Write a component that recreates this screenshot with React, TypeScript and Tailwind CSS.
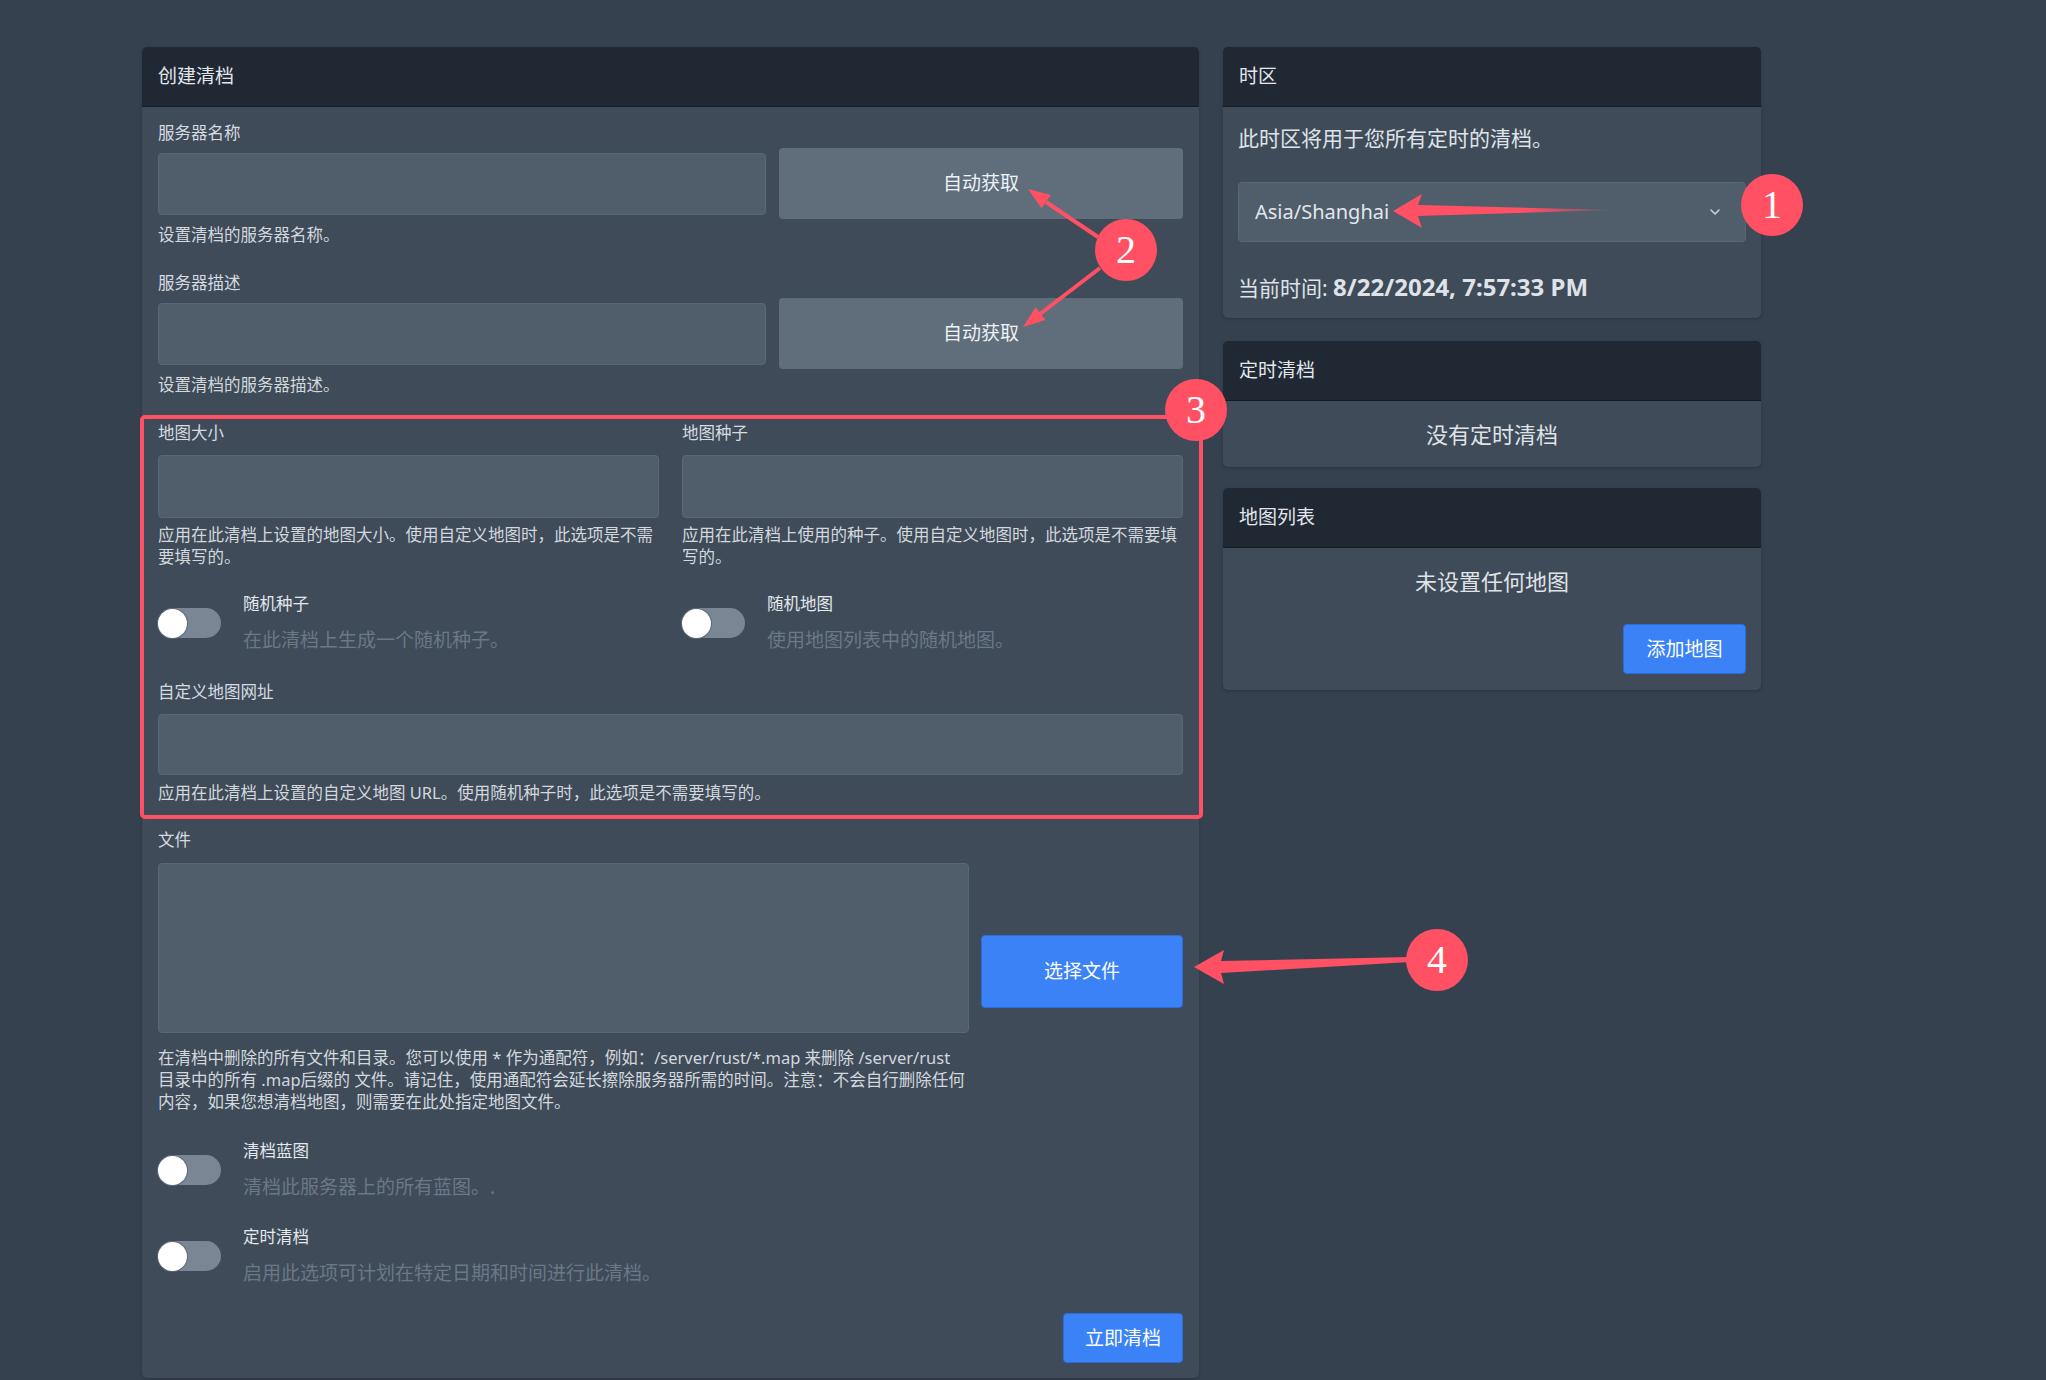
import { ChevronDown } from "lucide-react";

const font = "font-['Noto_Sans','Noto_Sans_CJK_SC',sans-serif]";

function Card({ title, children }: { title: string; children: React.ReactNode }) {
  return (
    <div className="overflow-hidden rounded-[5px] bg-[#3f4b59] shadow-[0_1px_3px_rgba(0,0,0,0.25)]">
      <div className="flex h-[60px] items-center border-b border-[#151b23] bg-[#1f2833] px-4 text-[19px] text-[#e3e7ec]">
        {title}
      </div>
      {children}
    </div>
  );
}

function Label({ children }: { children: React.ReactNode }) {
  return <div className="text-[16.5px] leading-[24px] text-[#d6dbe1]">{children}</div>;
}

function Help({ children, className = "" }: { children: React.ReactNode; className?: string }) {
  return <p className={"text-[16.5px] leading-[22px] text-[#d3d8de] " + className}>{children}</p>;
}

function Input({ className = "" }: { className?: string }) {
  return <div className={"rounded-[4px] border border-[#5b6777] bg-[#505d6b] " + className} />;
}

function Toggle({ title, desc }: { title: string; desc: string }) {
  return (
    <div className="flex items-center gap-[22px]">
      <div className="flex h-[30px] w-[63px] shrink-0 items-center rounded-full bg-[#7b8694]">
        <span className="size-[29px] rounded-full bg-white shadow-[0_0_0_1px_#5d6775]" />
      </div>
      <div>
        <div className="text-[16.5px] leading-[24px] text-[#e4e8ec]">{title}</div>
        <div className="mt-[10px] text-[19px] leading-[28px] text-[#6b7887]">{desc}</div>
      </div>
    </div>
  );
}

function Badge({ n, x, y }: { n: string; x: string; y: string }) {
  return (
    <div
      className={
        "absolute flex size-[62px] items-center justify-center rounded-full bg-[#ff5064] font-['Liberation_Serif',serif] text-[40px] leading-none text-white " +
        x +
        " " +
        y
      }
    >
      {n}
    </div>
  );
}

export default function App() {
  return (
    <div className={"relative h-[1380px] w-full overflow-hidden bg-[#364150] " + font}>
      <div className="flex items-start gap-[24px] pl-[142px] pt-[47px]">
        {/* 创建清档 */}
        <div className="w-[1057px]">
          <Card title="创建清档">
            <div className="px-4 pb-[15px] pt-[14px]">
              <Label>服务器名称</Label>
              <div className="mt-[3px] flex items-center gap-[13px]">
                <Input className="h-[62px] flex-1" />
                <button className="h-[71px] w-[404px] rounded-[4px] bg-[#606e7c] text-[19px] text-[#eef2f6]">
                  自动获取
                </button>
              </div>
              <div className="mt-[4px] text-[16.5px] leading-[24px] text-[#d3d8de]">设置清档的服务器名称。</div>

              <div className="mt-[24px]">
                <Label>服务器描述</Label>
                <div className="mt-[3px] flex items-center gap-[13px]">
                  <Input className="h-[62px] flex-1" />
                  <button className="h-[71px] w-[404px] rounded-[4px] bg-[#606e7c] text-[19px] text-[#eef2f6]">
                    自动获取
                  </button>
                </div>
                <div className="mt-[4px] text-[16.5px] leading-[24px] text-[#d3d8de]">设置清档的服务器描述。</div>
              </div>

              <div className="mt-[24px] grid grid-cols-2 gap-x-[23px]">
                <div>
                  <Label>地图大小</Label>
                  <Input className="mt-[10px] h-[63px]" />
                  <Help className="mt-[6px]">
                    应用在此清档上设置的地图大小。使用自定义地图时，此选项是不需要填写的。
                  </Help>
                </div>
                <div>
                  <Label>地图种子</Label>
                  <Input className="mt-[10px] h-[63px]" />
                  <Help className="mt-[6px]">
                    应用在此清档上使用的种子。使用自定义地图时，此选项是不需要填写的。
                  </Help>
                </div>
                <div className="mt-[24px]">
                  <Toggle title="随机种子" desc="在此清档上生成一个随机种子。" />
                </div>
                <div className="mt-[24px]">
                  <Toggle title="随机地图" desc="使用地图列表中的随机地图。" />
                </div>
              </div>

              <div className="mt-[26px]">
                <Label>自定义地图网址</Label>
                <Input className="mt-[10px] h-[61px]" />
                <Help className="mt-[7px]">
                  应用在此清档上设置的自定义地图 URL。使用随机种子时，此选项是不需要填写的。
                </Help>
              </div>

              <div className="mt-[24px]">
                <Label>文件</Label>
                <div className="mt-[11px] flex items-start gap-[12px]">
                  <Input className="h-[170px] w-[811px]" />
                  <button className="mt-[72px] h-[73px] flex-1 rounded-[4px] border border-[#2b6de0] bg-[#3b82f6] text-[19px] text-white">
                    选择文件
                  </button>
                </div>
                <Help className="mt-[14px] w-[811px]">
                  在清档中删除的所有文件和目录。您可以使用 * 作为通配符，例如：/server/rust/*.map 来删除 /server/rust
                  目录中的所有 .map后缀的 文件。请记住，使用通配符会延长擦除服务器所需的时间。注意：不会自行删除任何内容，如果您想清档地图，则需要在此处指定地图文件。
                </Help>
              </div>

              <div className="mt-[26px]">
                <Toggle title="清档蓝图" desc="清档此服务器上的所有蓝图。." />
              </div>
              <div className="mt-[24px]">
                <Toggle title="定时清档" desc="启用此选项可计划在特定日期和时间进行此清档。" />
              </div>

              <div className="mt-[26px] flex justify-end">
                <button className="h-[50px] w-[120px] rounded-[4px] border border-[#2b6de0] bg-[#3b82f6] text-[19px] text-white">
                  立即清档
                </button>
              </div>
            </div>
          </Card>
        </div>

        {/* 右侧 */}
        <div className="flex w-[538px] flex-col">
          <Card title="时区">
            <div className="px-[15px] pb-[14px] pt-[15px]">
              <div className="text-[21px] leading-[32px] text-[#dfe3e8]">此时区将用于您所有定时的清档。</div>
              <div className="mt-[28px] flex h-[60px] items-center justify-between rounded-[4px] border border-[#5b6777] bg-[#505d6b] pl-[16px] pr-[22px]">
                <span className="text-[20px] text-[#e3e7eb]">Asia/Shanghai</span>
                <ChevronDown className="size-[16px] text-[#cfd5dc]" strokeWidth={2.2} />
              </div>
              <div className="mt-[29px] text-[21px] leading-[32px] text-[#dfe3e8]">
                当前时间: <span className="text-[24px] font-bold">8/22/2024, 7:57:33 PM</span>
              </div>
            </div>
          </Card>

          <div className="mt-[23px]">
            <Card title="定时清档">
              <div className="flex h-[66px] items-center justify-center text-[22px] text-[#dfe3e8]">没有定时清档</div>
            </Card>
          </div>

          <div className="mt-[21px]">
            <Card title="地图列表">
              <div className="px-[15px] pb-[16px] pt-[17px]">
                <div className="text-center text-[22px] leading-[32px] text-[#dfe3e8]">未设置任何地图</div>
                <div className="mt-[27px] flex justify-end">
                  <button className="h-[50px] w-[123px] rounded-[4px] border border-[#2b6de0] bg-[#3b82f6] text-[19px] text-white">
                    添加地图
                  </button>
                </div>
              </div>
            </Card>
          </div>
        </div>
      </div>

      {/* 标注 */}
      <div className="pointer-events-none absolute left-[140px] top-[415px] h-[404px] w-[1063px] rounded-[5px] border-[4px] border-[#ff5064]" />
      <svg className="pointer-events-none absolute left-0 top-0" width="2046" height="1380" viewBox="0 0 2046 1380">
        <defs>
          <linearGradient id="fade1" x1="1393" y1="0" x2="1612" y2="0" gradientUnits="userSpaceOnUse">
            <stop offset="0.6" stopColor="#ff5064" />
            <stop offset="1" stopColor="#ff5064" stopOpacity="0.2" />
          </linearGradient>
        </defs>
        <polygon
          points="1393,211 1422,194 1418,205 1612,210 1418,216 1422,228"
          fill="url(#fade1)"
        />
        <polygon points="1194,967 1224,950 1221,961 1410,957 1410,962 1221,973 1224,984" fill="#ff5064" />
        <line x1="1098" y1="237" x2="1046" y2="202" stroke="#ff5064" strokeWidth="4" />
        <polygon points="1028,189 1050.7,195 1041.5,208.2" fill="#ff5064" />
        <line x1="1100" y1="268" x2="1040" y2="314" stroke="#ff5064" strokeWidth="4" />
        <polygon points="1023,327 1045.4,320 1035.6,307.2" fill="#ff5064" />
      </svg>
      <Badge n="1" x="left-[1741px]" y="top-[174px]" />
      <Badge n="2" x="left-[1095px]" y="top-[219px]" />
      <Badge n="3" x="left-[1165px]" y="top-[379px]" />
      <Badge n="4" x="left-[1406px]" y="top-[929px]" />
    </div>
  );
}
